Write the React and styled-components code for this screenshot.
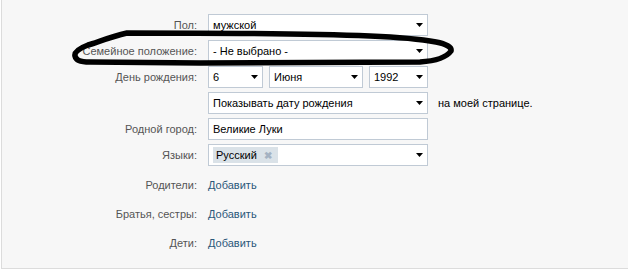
import React from "react"
import styled, { createGlobalStyle } from "styled-components"

const GlobalStyle = createGlobalStyle`
  html, body {
    margin: 0;
    padding: 0;
    background: #fff;
  }
  body {
    font-family: "Liberation Sans", Arial, sans-serif;
    font-size: 11px;
  }
`

const Page = styled.div`
  position: relative;
  width: 627px;
  height: 269px;
  margin-left: 1px;
  border-left: 1px solid #dcdcdc;
  border-bottom: 1px solid #dcdcdc;
  background: #f7f7f7;
  box-sizing: border-box;
`

const Form = styled.div`
  display: grid;
  grid-template-columns: 195px auto;
  column-gap: 11px;
  padding-top: 14px;
`

const Label = styled.div`
  height: ${props => (props.link ? 29 : 22)}px;
  margin-bottom: ${props => (props.link ? 0 : 4)}px;
  display: flex;
  align-items: center;
  justify-content: flex-end;
  color: #555;
  white-space: nowrap;
`

const Field = styled.div`
  height: ${props => (props.link ? 29 : 22)}px;
  margin-bottom: ${props => (props.link ? 0 : 4)}px;
  display: flex;
  align-items: center;
  gap: 6px;
`

const Box = styled.div`
  width: ${props => props.width}px;
  height: 22px;
  box-sizing: border-box;
  border: 1px solid #c0cad5;
  background: #fff;
  display: flex;
  align-items: center;
  padding: 0 4px 0 4px;
  color: #000;
  white-space: nowrap;
`

const BoxText = styled.span`
  flex: 1;
`

const Arrow = styled.svg`
  width: 7px;
  height: 5px;
  flex: none;
`

const Note = styled.span`
  margin-left: 4px;
  color: #000;
`

const Chip = styled.span`
  display: inline-flex;
  align-items: center;
  gap: 7px;
  height: 16px;
  padding: 0 6px 0 3px;
  background: #dae2e8;
  color: #000;
`

const ChipClose = styled.span`
  color: #a4b2c2;
  font-weight: bold;
  font-size: 10px;
`

const Link = styled.a`
  color: #2b587a;
  text-decoration: none;
`

const Scribble = styled.svg`
  position: absolute;
  left: -2px;
  top: 0;
  pointer-events: none;
`

const DropArrow = () => (
  <Arrow viewBox="0 0 7 5">
    <path d="M0 0h7L3.5 4z" fill="#000" />
  </Arrow>
)

const Select = ({ width, children }) => (
  <Box width={width}>
    <BoxText>{children}</BoxText>
    <DropArrow />
  </Box>
)

const App = () => {
  return (
    <Page>
      <GlobalStyle />
      <Form>
        <Label>Пол:</Label>
        <Field>
          <Select width={220}>мужской</Select>
        </Field>

        <Label>Семейное положение:</Label>
        <Field>
          <Select width={220}>- Не выбрано -</Select>
        </Field>

        <Label>День рождения:</Label>
        <Field>
          <Select width={55}>6</Select>
          <Select width={94}>Июня</Select>
          <Select width={59}>1992</Select>
        </Field>

        <Label />
        <Field>
          <Select width={220}>Показывать дату рождения</Select>
          <Note>на моей странице.</Note>
        </Field>

        <Label>Родной город:</Label>
        <Field>
          <Box width={220}>
            <BoxText>Великие Луки</BoxText>
          </Box>
        </Field>

        <Label>Языки:</Label>
        <Field>
          <Box width={220}>
            <BoxText>
              <Chip>
                Русский <ChipClose>✖</ChipClose>
              </Chip>
            </BoxText>
            <DropArrow />
          </Box>
        </Field>

        <Label link>Родители:</Label>
        <Field link>
          <Link href="#">Добавить</Link>
        </Field>

        <Label link>Братья, сестры:</Label>
        <Field link>
          <Link href="#">Добавить</Link>
        </Field>

        <Label link>Дети:</Label>
        <Field link>
          <Link href="#">Добавить</Link>
        </Field>
      </Form>

      {/* hand drawn circle around the marital status row */}
      <Scribble width="628" height="272" viewBox="0 0 628 272">
        <path
          d="M127 33 C 110 37, 98 42, 88 45 C 80 48, 74 52, 75 56 C 76 60, 79 62, 90 62 L 200 63 C 280 63, 360 62, 420 62 C 435 61, 446 58, 451 51 C 452 47, 446 44, 436 42 C 420 39, 395 37, 370 36 C 320 34, 250 33, 127 33 Z"
          fill="none"
          stroke="#000"
          strokeWidth="5.5"
          strokeLinejoin="round"
        />
      </Scribble>
    </Page>
  )
}

export default App
